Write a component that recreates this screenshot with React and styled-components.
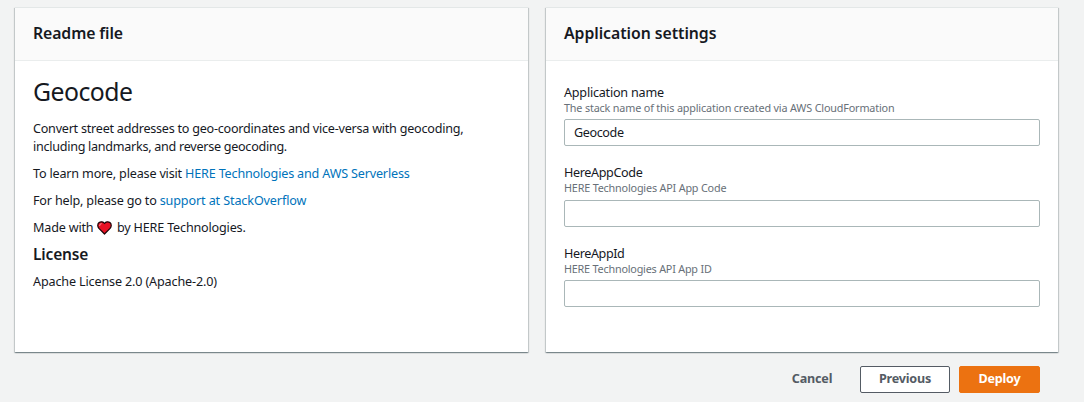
import React from 'react';
import styled, { createGlobalStyle } from 'styled-components';

const GlobalStyle = createGlobalStyle`
  *, *::before, *::after { box-sizing: border-box; }
  body {
    margin: 0;
    background: #f2f3f3;
    color: #16191f;
    font-family: "Noto Sans", "Open Sans", sans-serif;
    font-size: 12.6px;
    line-height: 18px;
  }
`;

const Page = styled.main`
  height: 402px;
  padding: 7px 26px 0 15px;
  overflow: hidden;
`;

const Columns = styled.div`
  display: grid;
  grid-template-columns: 513px 512px;
  gap: 18px;
`;

const Card = styled.section`
  height: 345px;
  background: #fff;
  border-top: 1px solid #e3e7e7;
  box-shadow: 0 1px 1px 0 rgba(0, 28, 36, 0.3), 1px 1px 1px 0 rgba(0, 28, 36, 0.15),
    -1px 1px 1px 0 rgba(0, 28, 36, 0.15);
`;

const CardHeader = styled.header`
  height: 53px;
  padding: 14px 18px 0;
  background: #fafafa;
  border-bottom: 1px solid #eaeded;
`;

const CardTitle = styled.h2`
  margin: 0;
  font-size: 15.8px;
  line-height: 22px;
  font-weight: 600;
  letter-spacing: ${(p) => p.$tracking}px;
  white-space: nowrap;
`;

const ReadmeBody = styled.div`
  padding: 13px 18px 0;
`;

const Heading = styled.h1`
  margin: 0 0 11px;
  font-size: 24.8px;
  line-height: 35px;
  font-weight: 400;
  letter-spacing: -0.55px;
`;

const Subheading = styled.h3`
  margin: -1px 0 10px;
  font-size: 15.5px;
  line-height: 18px;
  font-weight: 600;
  letter-spacing: -0.15px;
`;

const Paragraph = styled.p`
  margin: 0 0 9px;
  white-space: nowrap;
  letter-spacing: ${(p) => p.$tracking}px;
`;

const Link = styled.a`
  color: #0073bb;
  text-decoration: none;
  letter-spacing: ${(p) => p.$tracking}px;
`;

const Heart = styled.svg`
  width: 15px;
  height: 14px;
  margin: 0 4.5px 0 4px;
  vertical-align: -3px;
`;

const Form = styled.form`
  display: flex;
  flex-direction: column;
  gap: 18px;
  padding: 23px 18px 0;
`;

const Field = styled.div`
  display: flex;
  flex-direction: column;
`;

const Label = styled.label`
  line-height: 18px;
  letter-spacing: ${(p) => p.$tracking}px;
`;

const Hint = styled.span`
  margin-bottom: ${(p) => p.$gap}px;
  color: #687078;
  font-size: 10.8px;
  line-height: 11px;
  letter-spacing: ${(p) => p.$tracking}px;
`;

const Input = styled.input`
  width: 476px;
  height: 27px;
  margin: 0;
  padding: 0 9px;
  border: 1px solid #aab7b8;
  border-radius: 2px;
  background: #fff;
  color: #16191f;
  font: inherit;
  letter-spacing: -0.4px;
  outline: none;
`;

const Actions = styled.footer`
  display: flex;
  justify-content: flex-end;
  gap: 9px;
  padding: 14px 18px 0 0;
`;

const variants = {
  link: 'width: 78px; background: transparent; border-color: transparent; color: #545b64;',
  normal: 'width: 90px; background: #fff; border-color: #545b64; color: #545b64;',
  primary: 'width: 81px; background: #ec7211; border-color: #ec7211; color: #fff;',
};

const Button = styled.button`
  height: 27px;
  padding: 0 0 1px;
  border: 1px solid;
  border-radius: 2px;
  font: 700 12.6px/18px "Noto Sans", "Open Sans", sans-serif;
  letter-spacing: -0.2px;
  ${(p) => variants[p.$variant]}
`;

const fields = [
  {
    id: 'application-name',
    label: 'Application name',
    tracking: -0.22,
    hint: 'The stack name of this application created via AWS CloudFormation',
    hintTracking: -0.16,
    hintGap: 6,
    value: 'Geocode',
  },
  {
    id: 'here-app-code',
    label: 'HereAppCode',
    tracking: -0.37,
    hint: 'HERE Technologies API App Code',
    hintTracking: -0.18,
    hintGap: 7,
    value: '',
  },
  {
    id: 'here-app-id',
    label: 'HereAppId',
    tracking: -0.4,
    hint: 'HERE Technologies API App ID',
    hintTracking: -0.2,
    hintGap: 6,
    value: '',
  },
];

function HeartIcon() {
  return (
    <Heart viewBox="0 0 15 14" aria-hidden="true">
      <path
        d="M7.5 13 1.9 7.4C.3 5.500.4 2.9 2.1 1.6c1.7-1.3 4.1-.9 5.4.9 1.3-1.8 3.7-2.2 5.4-.9 1.7 1.3 1.8 3.9.2 5.8Z"
        fill="#e81224"
        stroke="#1c0508"
        strokeWidth="1.2"
        strokeLinejoin="round"
      />
      <path d="M2.7 4.5c0-1 .6-1.7 1.500-1.8" fill="none" stroke="#f8a3a8" strokeWidth="1" strokeLinecap="round" />
    </Heart>
  );
}

export default function App() {
  return (
    <>
      <GlobalStyle />
      <Page>
        <Columns>
          <Card>
            <CardHeader>
              <CardTitle $tracking={-0.1}>Readme file</CardTitle>
            </CardHeader>
            <ReadmeBody>
              <Heading>Geocode</Heading>
              <Paragraph $tracking={-0.24}>
                Convert street addresses to geo-coordinates and vice-versa with geocoding,
                <br />
                <Paragraph as="span" $tracking={-0.28}>including landmarks, and reverse geocoding.</Paragraph>
              </Paragraph>
              <Paragraph $tracking={-0.18}>
                To learn more, please visit <Link href="#" $tracking={-0.175}>HERE Technologies and AWS Serverless</Link>
              </Paragraph>
              <Paragraph $tracking={-0.18}>
                For help, please go to <Link href="#" $tracking={-0.12}>support at StackOverflow</Link>
              </Paragraph>
              <Paragraph $tracking={-0.18}>
                Made with
                <HeartIcon />
                by HERE Technologies.
              </Paragraph>
              <Subheading>License</Subheading>
              <Paragraph $tracking={-0.15}>Apache License 2.0 (Apache-2.0)</Paragraph>
            </ReadmeBody>
          </Card>
          <Card>
            <CardHeader>
              <CardTitle $tracking={-0.05}>Application settings</CardTitle>
            </CardHeader>
            <Form>
              {fields.map((f) => (
                <Field key={f.id}>
                  <Label htmlFor={f.id} $tracking={f.tracking}>{f.label}</Label>
                  <Hint $tracking={f.hintTracking} $gap={f.hintGap}>{f.hint}</Hint>
                  <Input id={f.id} defaultValue={f.value} />
                </Field>
              ))}
            </Form>
          </Card>
        </Columns>
        <Actions>
          <Button $variant="link">Cancel</Button>
          <Button $variant="normal">Previous</Button>
          <Button $variant="primary">Deploy</Button>
        </Actions>
      </Page>
    </>
  );
}
